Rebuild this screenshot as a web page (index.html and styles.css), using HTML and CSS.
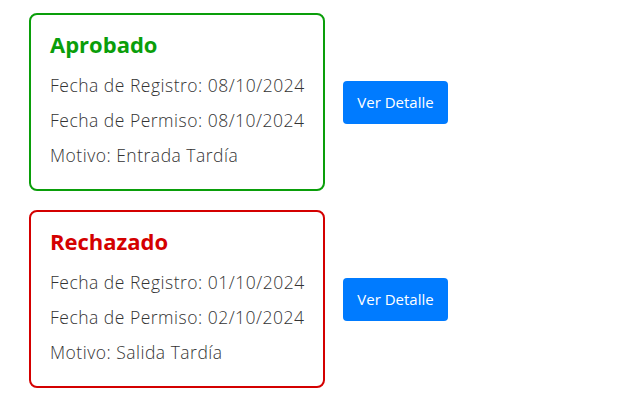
FILE: index.html
```html
<!DOCTYPE html>
<html lang="es">
<head>
<meta charset="utf-8">
<link rel="stylesheet" href="styles.css">
</head>
<body>
<div class="list">
  <div class="row">
    <div class="card card-ok">
      <h2 class="title">Aprobado</h2>
      <p class="line">Fecha de Registro: 08/10/2024</p>
      <p class="line">Fecha de Permiso: 08/10/2024</p>
      <p class="line">Motivo: Entrada Tardía</p>
    </div>
    <button class="btn">Ver Detalle</button>
  </div>
  <div class="row">
    <div class="card card-bad">
      <h2 class="title">Rechazado</h2>
      <p class="line">Fecha de Registro: 01/10/2024</p>
      <p class="line">Fecha de Permiso: 02/10/2024</p>
      <p class="line">Motivo: Salida Tardía</p>
    </div>
    <button class="btn">Ver Detalle</button>
  </div>
</div>
</body>
</html>
```
FILE: styles.css
```css
html, body { margin: 0; padding: 0; background: #fff; }
body { font-family: "Open Sans", "Noto Sans", sans-serif; color: #333; }
.list { display: flex; flex-direction: column; gap: 19px; padding: 13px 0 0 29px; }
.row { display: flex; align-items: center; gap: 18px; }
.card {
  width: 296px; box-sizing: border-box; height: 178px;
  border: 2px solid; border-radius: 8px;
  padding: 15px 0 0 19px;
}
.card-ok { border-color: #0a9e0a; }
.card-bad { border-color: #d40000; }
.card-ok .title { color: #0a9e0a; }
.card-bad .title { color: #d40000; }
.title { margin: 0 0 10px; font-size: 22px; font-weight: 700; line-height: 28px; }
.line { margin: 0; font-size: 17.5px; font-weight: 300; line-height: 35px; letter-spacing: 0.5px; white-space: nowrap; }
.btn {
  background: #007bff; color: #fff; border: 0; border-radius: 4px;
  font-family: inherit; font-size: 15px; font-weight: 400;
  width: 105px; height: 43px; padding: 0; cursor: pointer;
}
```
